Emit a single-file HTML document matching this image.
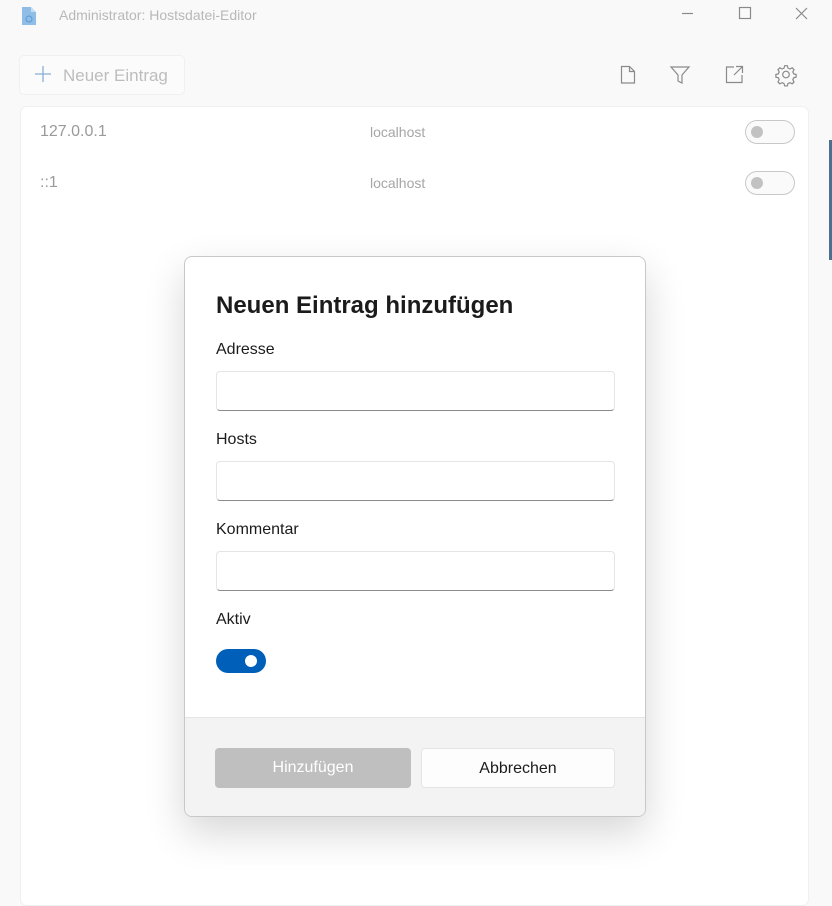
<!DOCTYPE html>
<html><head><meta charset="utf-8"><style>
*{box-sizing:border-box;margin:0;padding:0}
body{width:832px;height:887px;background:#f9f9f9;font-family:"Segoe UI","Liberation Sans",sans-serif;position:relative;overflow:hidden;color:#1b1b1b}
.abs{position:absolute}
.title{left:59px;top:7px;font-size:14px;color:#b8b8b8}
.btnNew{left:19px;top:55px;width:166px;height:40px;border:1px solid #f0f0f0;border-radius:5px;background:#fbfbfb}
.btnNew span{position:absolute;left:43px;top:10px;font-size:17px;color:#bdbdbd}
.list{left:20px;top:106px;width:789px;height:800px;background:#fff;border:1px solid #f0f0f0;border-radius:7px}
.row{font-size:16px;color:#9a9a9a}
.host{font-size:14px;color:#a6a6a6}
.tog{width:50px;height:24px;border:1px solid #c8c8c8;border-radius:12px;background:#fafafa}
.tog:after{content:"";position:absolute;left:5px;top:5px;width:12px;height:12px;border-radius:50%;background:#c2c2c2}
.dlg{left:184px;top:256px;width:462px;height:561px;background:#fff;border:1px solid #c8c8c8;border-radius:8px;box-shadow:0 16px 40px rgba(0,0,0,.16);overflow:hidden}
.dlg h1{position:absolute;left:31px;top:35px;font-size:24px;font-weight:600;color:#1b1b1b}
.lbl{position:absolute;left:31px;font-size:16px;color:#1b1b1b}
.inp{position:absolute;left:31px;width:399px;height:40px;border:1px solid #e5e5e5;border-bottom:1px solid #8a8a8a;border-radius:4px;background:#fff}
.foot{position:absolute;left:0;top:460px;width:100%;height:101px;background:#f3f3f3;border-top:1px solid #e5e5e5}
.b{position:absolute;top:30px;height:40px;border-radius:4px;font-size:16px;text-align:center;line-height:39px}
</style></head><body>
<svg class="abs" style="left:21px;top:6px" width="16" height="20" viewBox="0 0 16 20"><path d="M1 1h9l5 5v13H1z" fill="#8fbde6"/><path d="M10 1v5h5" fill="#c5dff5"/><circle cx="8" cy="13" r="3" fill="none" stroke="#5a9ad6" stroke-width="1"/></svg>
<div class="abs title">Administrator: Hostsdatei-Editor</div>
<svg class="abs" style="left:600px;top:0" width="232" height="100" viewBox="0 0 232 100" fill="none" stroke="#8a8a8a" stroke-width="1.2">
<path d="M82 13.5h11"/><rect x="139.5" y="7.5" width="11" height="11"/><path d="M196 8l11 11M207 8l-11 11"/>
<path d="M21.5 66.5h8l5 5v11.5h-13z M29.5 66.5v5h5"/>
<path d="M71 67h18l-7 8v8l-4-2v-6z"/>
<path d="M134 67h-7.5v15.5h15.5V75 M136 66.5h6.5V73 M142 67l-8 8"/>
<g transform="translate(186 74.5) scale(1.1) translate(-186 -74.5)" stroke-width="1.1"><circle cx="186" cy="74.5" r="3"/><path d="M184.8 66.5h2.4l.6 2.2 1.8.8 2-1.1 1.7 1.7-1.1 2 .8 1.8 2.2.6v2.4l-2.2.6-.8 1.8 1.1 2-1.7 1.7-2-1.1-1.8.8-.6 2.2h-2.4l-.6-2.2-1.8-.8-2 1.1-1.7-1.7 1.1-2-.8-1.8-2.2-.6v-2.4l2.2-.6.8-1.8-1.1-2 1.7-1.7 2 1.1 1.8-.8z"/></g>
</svg>
<div class="abs btnNew"><svg class="abs" style="left:14px;top:9px" width="18" height="18"><path d="M9 1v16M1 9h16" stroke="#8aaed4" stroke-width="1.3"/></svg><span>Neuer Eintrag</span></div>
<div class="abs list"></div>
<div class="abs row" style="left:40px;top:123px">127.0.0.1</div>
<div class="abs host" style="left:370px;top:124px">localhost</div>
<div class="abs tog" style="left:745px;top:120px"></div>
<div class="abs row" style="left:40px;top:174px">::1</div>
<div class="abs host" style="left:370px;top:175px">localhost</div>
<div class="abs tog" style="left:745px;top:171px"></div>
<div class="abs" style="left:829px;top:140px;width:3px;height:120px;background:#4a6f8f"></div>
<div class="abs dlg">
<h1>Neuen Eintrag hinzufügen</h1>
<div class="lbl" style="top:84px">Adresse</div><div class="inp" style="top:114px"></div>
<div class="lbl" style="top:174px">Hosts</div><div class="inp" style="top:204px"></div>
<div class="lbl" style="top:264px">Kommentar</div><div class="inp" style="top:294px"></div>
<div class="lbl" style="top:354px">Aktiv</div>
<div style="position:absolute;left:31px;top:392px;width:50px;height:24px;border-radius:12px;background:#005fb8"><div style="position:absolute;left:29px;top:6px;width:12px;height:12px;border-radius:50%;background:#fff"></div></div>
<div class="foot">
<div class="b" style="left:30px;width:196px;background:#bfbfbf;color:#fff">Hinzufügen</div>
<div class="b" style="left:236px;width:194px;background:#fdfdfd;border:1px solid #e5e5e5;color:#1b1b1b">Abbrechen</div>
</div>
</div>
</body></html>
